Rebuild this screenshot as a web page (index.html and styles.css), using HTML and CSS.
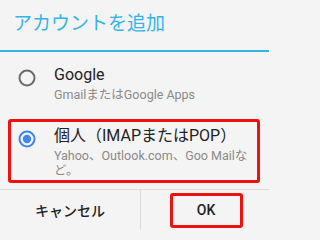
FILE: index.html
```html
<!DOCTYPE html>
<html lang="ja">
<head>
<meta charset="utf-8">
<link rel="stylesheet" href="styles.css">
</head>
<body>
<div class="dialog">
  <div class="header"><span class="title">アカウントを追加</span></div>
  <div class="options">
    <div class="option">
      <svg class="radio" viewBox="0 0 18 18" width="18" height="18"><circle cx="9" cy="9" r="7.5" fill="none" stroke="#6b6b6b" stroke-width="2"/></svg>
      <div class="text">
        <div class="name">Google</div>
        <div class="desc">GmailまたはGoogle Apps</div>
      </div>
    </div>
    <div class="option selected">
      <svg class="radio" viewBox="0 0 18 18" width="18" height="18"><circle cx="9" cy="9" r="7.5" fill="none" stroke="#3f87ee" stroke-width="2"/><circle cx="9" cy="9" r="4.2" fill="#3f87ee"/></svg>
      <div class="text">
        <div class="name">個人（IMAPまたはPOP）</div>
        <div class="desc">Yahoo、Outlook.com、Goo Mailなど。</div>
      </div>
    </div>
  </div>
  <div class="buttons">
    <div class="btn">キャンセル</div>
    <div class="btn"><span class="ok">OK</span></div>
  </div>
</div>
</body>
</html>
```
FILE: styles.css
```css
html, body {
  margin: 0;
  padding: 0;
  background: #f4f4f4;
}
body {
  width: 269px;
  height: 230px;
  overflow: hidden;
  font-family: "Roboto", "Noto Sans CJK JP", sans-serif;
  color: #222;
}
.dialog {
  display: flex;
  flex-direction: column;
  height: 230px;
}
.header {
  height: 52px;
  box-sizing: border-box;
  display: flex;
  align-items: center;
  padding: 0 0 3px 13px;
  border-bottom: 2px solid #33b5e5;
}
.title {
  font-size: 19px;
  color: #33b5e5;
  line-height: 24px;
}
.options {
  display: flex;
  flex-direction: column;
}
.option {
  display: grid;
  grid-template-columns: 18px 1fr;
  column-gap: 18px;
  align-items: start;
  padding: 13px 9px 17px 18px;
}
.radio {
  display: block;
  margin-top: 4px;
}
.name {
  font-size: 16px;
  line-height: 20px;
  color: #222;
}
.desc {
  font-size: 12.5px;
  line-height: 15px;
  color: #8a8a8a;
  margin-top: 2px;
}
.option.selected {
  margin: 0 9px 0 8px;
  border: 3px solid #f01010;
  border-radius: 3px;
  padding: 4px 7px 2px 7px;
}
.buttons {
  margin-top: 6px;
  border-top: 1px solid #dcdcdc;
  display: grid;
  grid-template-columns: 140px 1fr;
  flex: 1;
}
.btn {
  display: flex;
  align-items: center;
  justify-content: center;
  font-size: 14px;
  font-weight: 500;
  color: #222;
}
.btn + .btn {
  border-left: 1px solid #dcdcdc;
}
.ok {
  width: 67px;
  height: 29px;
  border: 3px solid #f01010;
  border-radius: 3px;
  display: flex;
  align-items: center;
  justify-content: center;
  margin-left: 2px;
}
```
